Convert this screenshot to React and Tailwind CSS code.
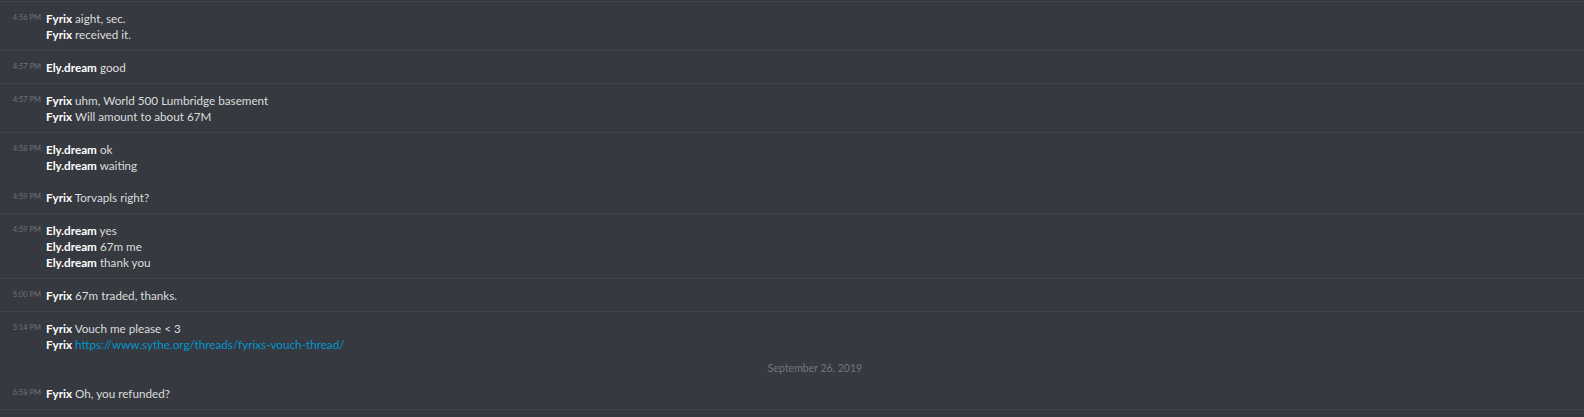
const groups = [
  { time: "4:56 PM", lines: [["Fyrix", "aight, sec."], ["Fyrix", "received it."]], border: true },
  { time: "4:57 PM", lines: [["Ely.dream", "good"]], border: true },
  { time: "4:57 PM", lines: [["Fyrix", "uhm, World 500 Lumbridge basement"], ["Fyrix", "Will amount to about 67M"]], border: true },
  { time: "4:58 PM", lines: [["Ely.dream", "ok"], ["Ely.dream", "waiting"]], border: false },
  { time: "4:59 PM", lines: [["Fyrix", "Torvapls right?"]], border: true },
  { time: "4:59 PM", lines: [["Ely.dream", "yes"], ["Ely.dream", "67m me"], ["Ely.dream", "thank you"]], border: true },
  { time: "5:00 PM", lines: [["Fyrix", "67m traded, thanks."]], border: true },
  {
    time: "5:14 PM",
    lines: [["Fyrix", "Vouch me please < 3"], ["Fyrix", "https://www.sythe.org/threads/fyrixs-vouch-thread/", true]],
    border: false,
  },
];

function Group({ time, lines, border }) {
  return (
    <div className={"flex py-2 " + (border ? "border-b border-[#3f4248]" : "")}>
      <div className="w-[42px] shrink-0 pr-[1px] text-right text-[7.5px] leading-4 text-[#6f737a]">{time}</div>
      <div className="ml-1 flex flex-col">
        {lines.map(([name, text, link], i) => (
          <div key={i} className="h-4 text-[11.7px] leading-4 whitespace-nowrap">
            <span className="font-bold text-white">{name}</span>{" "}
            <span className={link ? "text-[#0096cf]" : "text-[#dcddde]"}>{text}</span>
          </div>
        ))}
      </div>
    </div>
  );
}

export default function App() {
  return (
    <div className="h-[417px] w-[1584px] overflow-hidden bg-[#36393f] font-['Lato',sans-serif]">
      <div className="h-[2px] border-b border-[#3f4248]" />
      {groups.map((g, i) => (
        <Group key={i} {...g} />
      ))}
      <div className="flex h-[17px]">
        <div className="w-[46px] shrink-0" />
        <div className="flex-1 text-center text-[10.5px] leading-[17px] text-[#72767d]">September 26, 2019</div>
      </div>
      <Group time="6:58 PM" lines={[["Fyrix", "Oh, you refunded?"]]} border />
    </div>
  );
}
